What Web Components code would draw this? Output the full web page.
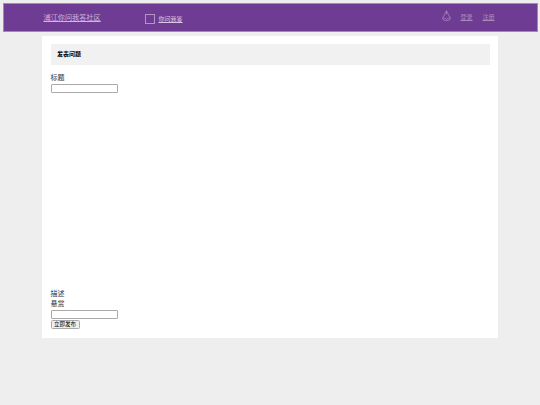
<!DOCTYPE html>
<html lang="zh-CN">
<head>
<meta charset="utf-8">
<title>发表问题</title>
<style>
  body {
    margin:0;
    height:405px;
    overflow:hidden;
    background:#eee;
    color:#333;
    font-family:"Liberation Sans", "Noto Sans CJK SC", sans-serif;
    font-size:7px;
    line-height:10px;
  }
</style>
</head>
<body>
<qa-header>
  <nav-link slot="brand" size="brand">浦江你问我答社区</nav-link>
  <nav-link slot="nav">你问我答</nav-link>
  <nav-link slot="user" muted>登录</nav-link>
  <nav-link slot="user" muted>注册</nav-link>
</qa-header>
<qa-panel>
  <span slot="title">发表问题</span>
  <qa-field class="title">标题</qa-field>
  <qa-editor>描述</qa-editor>
  <qa-field>悬赏</qa-field>
  <qa-button>立即发布</qa-button>
</qa-panel>

<script>
// nav-link - underlined link used in the top bar
class NavLink extends HTMLElement {
  constructor() {
    super();
    this.attachShadow({ mode: 'open' });
  }

  connectedCallback() {
    this.shadowRoot.innerHTML = `
      <style>
        :host { display:block; font-size:6px; line-height:10px; white-space:nowrap; }
        :host([size="brand"]) { font-size:7.15px; }
        a { color:#d9c6e8; text-decoration:underline; text-decoration-thickness:1px; text-underline-offset:1px; }
        :host([size="brand"]) a { color:#cdb6df; }
        :host([muted]) a { color:#a78abb; }
      </style>
      <a href="#"><slot></slot></a>
    `;
  }
}

// qa-header - purple bar with brand, main nav and user links
class QaHeader extends HTMLElement {
  constructor() {
    super();
    this.attachShadow({ mode: 'open' });
  }

  connectedCallback() {
    this.shadowRoot.innerHTML = `
      <style>
        :host { display:block; padding:3px 2px 0 3px; }
        header {
          box-sizing:border-box;
          height:29px;
          display:flex;
          align-items:center;
          padding:0 42.5px 0 39.5px;
          background:#6f3c94;
          border:1px solid #a485bc;
        }
        .brand { width:101.5px; }
        .nav { display:flex; align-items:center; gap:3.5px; margin-top:2px; }
        .box { box-sizing:border-box; width:10px; height:10px; border:1px solid #b294c8; }
        .user { display:flex; gap:10px; margin-left:auto; align-items:center; margin-top:-1px; }
        svg { display:block; width:9px; height:12px; margin-top:-3px; margin-right:-1px; }
      </style>
      <header>
        <div class="brand"><slot name="brand"></slot></div>
        <div class="nav"><span class="box"></span><slot name="nav"></slot></div>
        <div class="user">
          <svg viewBox="0 0 9 12" fill="none" stroke="#aa8dc0" stroke-width=".7">
            <path d="M4.5 .6L6.6 5L8.6 8.4C7.8 11.4 1.2 11.4.4 8.4L2.4 5Z"/>
            <path d="M4.5 1V4.2M.6 8.2H2.8L4.5 9.5L6.2 8.2H8.4"/>
          </svg>
          <slot name="user"></slot>
        </div>
      </header>
    `;
  }
}

// qa-panel - white sheet with a grey title strip
class QaPanel extends HTMLElement {
  constructor() {
    super();
    this.attachShadow({ mode: 'open' });
  }

  connectedCallback() {
    this.shadowRoot.innerHTML = `
      <style>
        :host {
          display:block;
          box-sizing:border-box;
          width:456px;
          height:302px;
          margin:4px 0 0 42px;
          padding:8px 8.5px 0;
          background:#fff;
        }
        h1 {
          margin:0 0 8px;
          padding:5px 6.5px 6px;
          height:10px;
          background:#f1f1f1;
          color:#000;
          font-size:6px;
          line-height:10px;
        }
      </style>
      <h1><slot name="title"></slot></h1>
      <slot></slot>
    `;
  }
}

// qa-field - label above a one-line input
class QaField extends HTMLElement {
  constructor() {
    super();
    this.attachShadow({ mode: 'open' });
  }

  connectedCallback() {
    this.shadowRoot.innerHTML = `
      <style>
        :host { display:block; }
        :host(.title) { height:216px; }
        label { display:block; padding-bottom:1px; }
        input {
          display:block;
          box-sizing:border-box;
          width:67px;
          height:9px;
          margin:0;
          padding:0 2px;
          border:1px solid #aaa;
          border-radius:1px;
          background:#fff;
          font-size:6px;
        }
      </style>
      <label><slot></slot></label>
      <input type="text">
    `;
  }
}

class QaEditor extends HTMLElement {
  constructor() {
    super();
    this.attachShadow({ mode: 'open' });
  }

  connectedCallback() {
    this.shadowRoot.innerHTML = `
      <style>
        :host { display:block; }
      </style>
      <slot></slot>
    `;
  }
}

class QaButton extends HTMLElement {
  constructor() {
    super();
    this.attachShadow({ mode: 'open' });
  }

  connectedCallback() {
    this.shadowRoot.innerHTML = `
      <style>
        :host { display:block; margin-top:1px; }
        button {
          display:block;
          box-sizing:border-box;
          width:29px;
          height:9px;
          padding:0;
          border:1px solid #aaa;
          border-radius:1.5px;
          background:#efefef;
          color:#000;
          font-family:inherit;
          font-size:5.5px;
          line-height:7px;
          white-space:nowrap;
        }
      </style>
      <button type="button"><slot></slot></button>
    `;
  }
}

customElements.define('nav-link', NavLink);
customElements.define('qa-header', QaHeader);
customElements.define('qa-panel', QaPanel);
customElements.define('qa-field', QaField);
customElements.define('qa-editor', QaEditor);
customElements.define('qa-button', QaButton);
</script>
</body>
</html>
